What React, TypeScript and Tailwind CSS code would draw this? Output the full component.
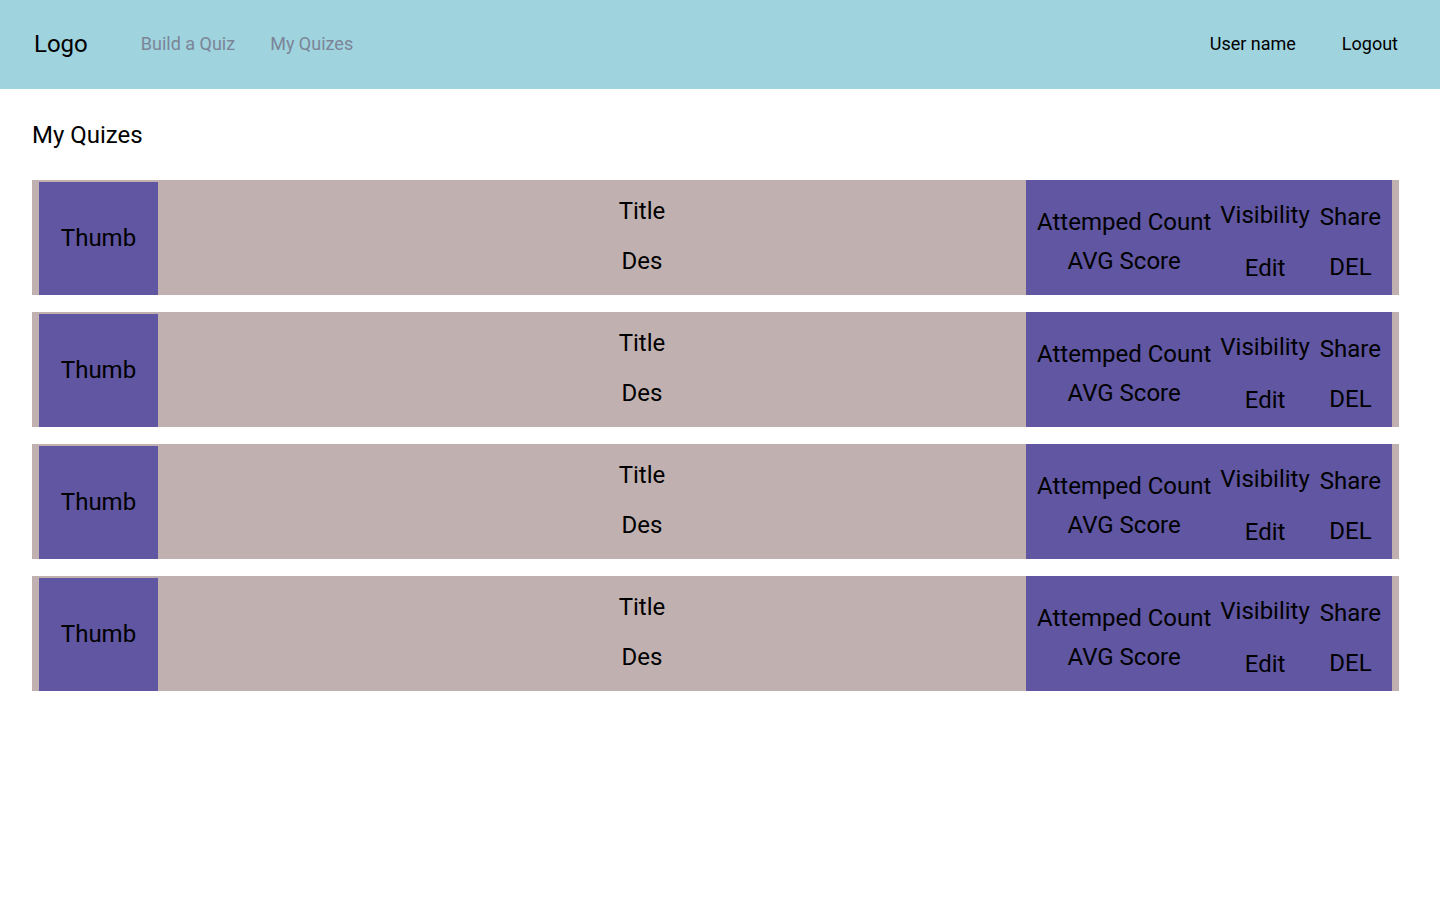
import React from 'react';

const quizzes = [1, 2, 3, 4];

const QuizRow: React.FC = () => {
  return (
    <div className="flex h-[115px] bg-[#c0b1b0] pl-[7px] pr-[7px]">
      {/* Thumb */}
      <div className="mt-[2px] flex w-[119px] items-center justify-center bg-[#6056a1] pb-[2px] text-2xl">
        Thumb
      </div>

      {/* Title + description */}
      <div className="flex flex-1 flex-col items-center pl-[100px] pt-[17px] text-2xl leading-7">
        <div>Title</div>
        <div className="mt-[22px]">Des</div>
      </div>

      {/* Stats + actions */}
      <div className="flex w-[366px] shrink-0 justify-end bg-[#6056a1] pr-[11px] text-2xl leading-7">
        <div className="flex flex-col items-center pt-[28px]">
          <div>Attemped Count</div>
          <div className="mt-[11px]">AVG Score</div>
        </div>
        <div className="ml-[9px] flex flex-col items-center pt-[21px]">
          <div>Visibility</div>
          <div className="mt-[25px]">Edit</div>
        </div>
        <div className="ml-[10px] flex flex-col items-center pt-[23px]">
          <div>Share</div>
          <div className="mt-[22px]">DEL</div>
        </div>
      </div>
    </div>
  );
};

export default function App() {
  return (
    <div className="min-h-screen bg-white text-black" style={{ fontFamily: 'Roboto, "Noto Sans", sans-serif' }}>
      <header className="flex h-[89px] items-center bg-[#9fd3de] pb-[2px] pl-[34px] pr-[42px]">
        <div className="text-2xl">Logo</div>
        <nav className="ml-[53px] flex gap-[35px] text-lg text-[#7b8597]">
          <span>Build a Quiz</span>
          <span>My Quizes</span>
        </nav>
        <div className="ml-auto flex gap-[46px] text-lg">
          <span>User name</span>
          <span>Logout</span>
        </div>
      </header>

      <main className="pl-[32px] pr-[41px]">
        <h1 className="mt-[30px] text-2xl leading-8">My Quizes</h1>
        <div className="mt-[29px] flex flex-col gap-[17px]">
          {quizzes.map((q) => (
            <QuizRow key={q} />
          ))}
        </div>
      </main>
    </div>
  );
}
